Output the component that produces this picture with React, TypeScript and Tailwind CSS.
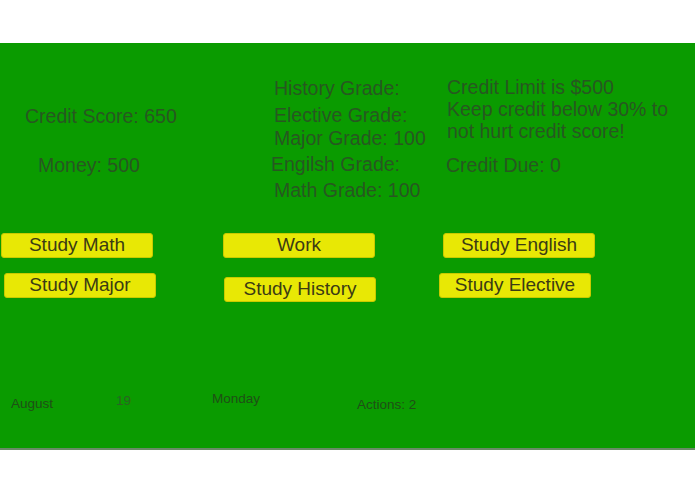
const font = { fontFamily: '"Liberation Sans", Arial, sans-serif' };

function GameButton({ label, className = '' }: { label: string; className?: string }) {
  return (
    <button
      className={`w-[152px] h-[25px] pb-[2px] rounded-[3px] border border-[#c9c900] bg-[#e8e805] text-[19px] leading-[21px] text-[#3b3b14] text-center ${className}`}
    >
      {label}
    </button>
  );
}

export default function App() {
  return (
    <div className="h-[494px] w-[695px] bg-white pt-[43px] overflow-hidden" style={font}>
      <div className="h-[407px] bg-[#0a9b00] border-b-2 border-[#6a8a67] flex flex-col">
        {/* Stats */}
        <div className="h-[190px] flex items-start text-[19.5px] leading-[22px] text-[#275720]">
          <div className="w-[274px] pl-[25px] pt-[62px]">
            <p>Credit Score: 650</p>
            <p className="mt-[27px] ml-[13px]">Money: 500</p>
          </div>
          <div className="w-[173px] pt-[34px]">
            <p>History Grade:</p>
            <p className="mt-[5px]">Elective Grade:</p>
            <p className="mt-[1px]">Major Grade: 100</p>
            <p className="mt-[4px] -ml-[3px]">Engilsh Grade:</p>
            <p className="mt-[4px]">Math Grade: 100</p>
          </div>
          <div className="flex-1 pt-[33px]">
            <p>Credit Limit is $500</p>
            <p>Keep credit below 30% to</p>
            <p>not hurt credit score!</p>
            <p className="mt-[12px] -ml-[1px]">Credit Due: 0</p>
          </div>
        </div>

        {/* Actions */}
        <div className="flex items-start">
          <div className="w-[222px] flex flex-col items-start">
            <GameButton label="Study Math" className="ml-[1px]" />
            <GameButton label="Study Major" className="ml-[4px] mt-[15px]" />
          </div>
          <div className="w-[217px] flex flex-col items-start">
            <GameButton label="Work" className="ml-[1px]" />
            <GameButton label="Study History" className="ml-[2px] mt-[19px]" />
          </div>
          <div className="flex flex-col items-start">
            <GameButton label="Study English" className="ml-[4px]" />
            <GameButton label="Study Elective" className="mt-[15px]" />
          </div>
        </div>

        {/* Calendar */}
        <div className="mt-[89px] flex items-start text-[13.5px] leading-[16px] text-[#1f4f16]">
          <div className="w-[116px] pl-[11px] mt-[5px]">August</div>
          <div className="w-[96px] mt-[2px] text-[#2c6322]">19</div>
          <div className="w-[145px]">Monday</div>
          <div className="mt-[6px]">Actions: 2</div>
        </div>
      </div>
    </div>
  );
}
